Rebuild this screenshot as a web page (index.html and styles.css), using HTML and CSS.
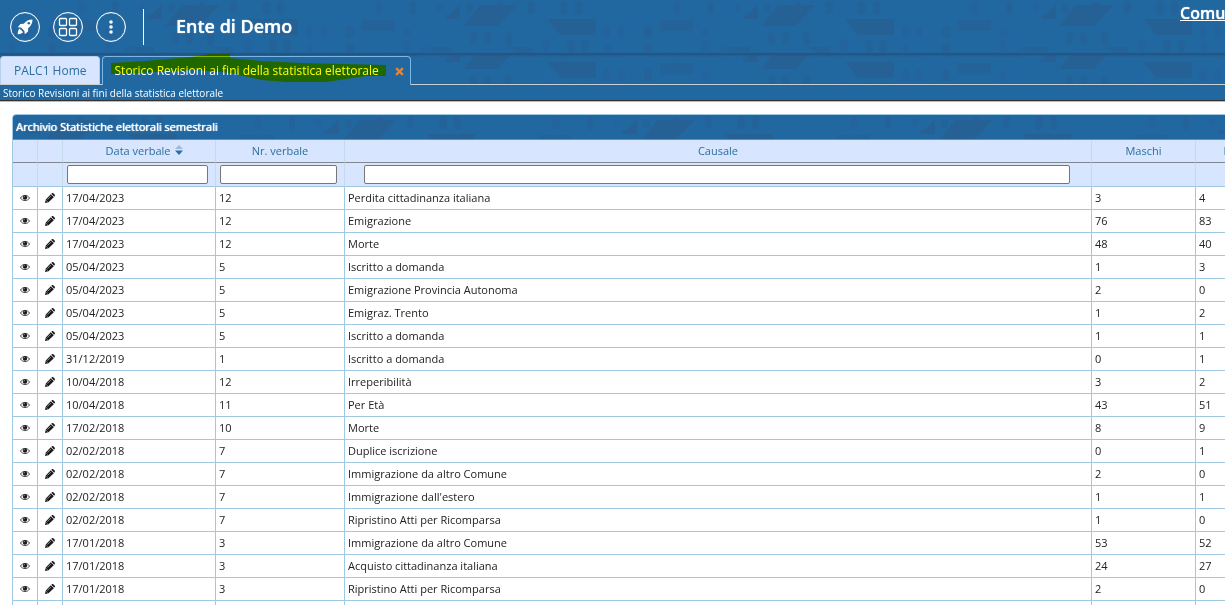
FILE: index.html
```html
<!DOCTYPE html>
<html lang="it">
<head>
<meta charset="utf-8">
<title>Ente di Demo</title>
<link rel="stylesheet" href="styles.css">
</head>
<body>
<svg class="defs" aria-hidden="true">
  <symbol id="eye" viewBox="0 0 11 8"><path d="M.5 4C2.8.2 8.2.2 10.500 4 8.200 7.800 2.800 7.800.500 4Z" fill="#fff" stroke="#222" stroke-width=".9"/><circle cx="5.500" cy="3.500" r="2.400" fill="#1a1a1a"/><path d="M4.300 3.300Q4.400 2.200 5.500 2.100" fill="none" stroke="#ccc" stroke-width=".6"/></symbol>
  <symbol id="pencil" viewBox="0 0 10 10"><path d="M0 10 .8 6.500 5.800 1.200 8.800 4.200 3.500 9.200ZM6.300.8 7.300 0Q7.800-.2 8.300.2L9.800 1.700Q10.200 2.200 9.800 2.700L9.200 3.700Z" fill="#1a1a1a"/><path d="M1.400 7.400 2.600 8.600M2.300 6.600 6 2.900" stroke="#fff" stroke-width=".5"/></symbol>
</svg>
<header class="topbar">
  <nav class="tools">
    <button class="round" type="button" aria-label="Avvio rapido"><svg viewBox="0 0 16 16"><path d="M15.500.5Q10 .5 6.800 4.800L3.400 5 .8 8.200 4 8.600 7.400 12 7.800 15.200 11 12.600 11.200 9.200Q15.500 6 15.500.5Z" fill="#fff"/><circle cx="11.800" cy="4.200" r="1.300" fill="#2167a0"/><path d="M3.300 9.600Q.8 10.300.7 15.300 5.400 15 6.300 12.700L5 12.500 4.700 11.200 3.300 11Z" fill="#fff"/></svg></button>
    <button class="round" type="button" aria-label="Applicazioni"><svg class="grid-icon" viewBox="0 0 20 20" fill="none" stroke="#fff" stroke-width="1.300"><rect x="1.500" y="1.500" width="7" height="7" rx="1"/><rect x="11.500" y="1.500" width="7" height="7" rx="1"/><rect x="1.500" y="11.500" width="7" height="7" rx="1"/><rect x="11.500" y="11.500" width="7" height="7" rx="1"/></svg></button>
    <button class="round" type="button" aria-label="Menu"><svg viewBox="0 0 16 16" fill="#fff"><circle cx="8" cy="3" r="1.800"/><circle cx="8" cy="8" r="1.800"/><circle cx="8" cy="13" r="1.800"/></svg></button>
  </nav>
  <h1 class="ente">Ente di Demo</h1>
  <a class="comune" href="#">Comune</a>
</header>
<nav class="tabs">
  <a class="tab" href="#">PALC1 Home</a>
  <div class="tab tab-active">
    <a class="tab-link" href="#">Storico Revisioni ai fini della statistica elettorale</a>
    <button class="close" type="button" aria-label="Chiudi"><svg viewBox="0 0 8 8"><path d="M1 1 7 7M7 1 1 7" stroke="#f58220" stroke-width="2"/></svg></button>
    <svg class="marker" viewBox="0 0 276 30" aria-hidden="true"><path d="M0 9 35 7 80 3 100 0H119V4L150 7 190 9 275 11V22H255L235 25 215 28H175L150 26 120 19 85 16 45 18 10 20H0Z" fill="#ff0"/></svg>
  </div>
</nav>
<div class="crumb">Storico Revisioni ai fini della statistica elettorale</div>
<main class="content">
  <section class="panel">
    <h2 class="panel-title">Archivio Statistiche elettorali semestrali</h2>
    <table class="grid">
      <colgroup><col class="c-icon"><col class="c-icon"><col class="c-date"><col class="c-nr"><col><col class="c-num"><col class="c-num"></colgroup>
      <thead>
        <tr class="labels"><th></th><th></th><th class="sorted">Data verbale <svg class="sort" viewBox="0 0 8 10"><path d="M0 4 4 0 8 4Z" fill="#9bb9dc"/><path d="M0 5.500H8L4 10Z" fill="#2d6ca5"/></svg></th><th>Nr. verbale</th><th>Causale</th><th>Maschi</th><th>Femmine</th></tr>
        <tr class="filters"><td></td><td></td><td><input type="text" aria-label="Data verbale"></td><td><input type="text" aria-label="Nr. verbale"></td><td><input class="wide" type="text" aria-label="Causale"></td><td></td><td></td></tr>
      </thead>
      <tbody id="rows"></tbody>
    </table>
  </section>
</main>
<script src="rows.js"></script>
</body>
</html>
```
FILE: styles.css
```css
:root {
  --blue: #2167a0;
  --line: #a0c8e2;
  --town: url("data:image/svg+xml,%3Csvg xmlns='http://www.w3.org/2000/svg' width='298' height='56'%3E%3Cg fill='%232b5b8c' fill-opacity='.5'%3E%3Cpath d='M3 26 20 5H58L38 26ZM87 19H136V35H100ZM298 4 283 19H298Z'/%3E%3Cg fill-opacity='.28'%3E%3Crect x='6' y='4' width='7' height='9' rx='3'/%3E%3Crect x='36' y='2' width='8' height='9' rx='3'/%3E%3Crect x='68' y='1' width='7' height='13' rx='3'/%3E%3Crect x='100' y='1' width='8' height='14' rx='3'/%3E%3Crect x='115' y='1' width='7' height='14' rx='3'/%3E%3Crect x='213' y='1' width='8' height='14' rx='3'/%3E%3Crect x='248' y='1' width='6' height='14' rx='3'/%3E%3Crect x='274' y='3' width='7' height='9' rx='3'/%3E%3Crect x='10' y='32' width='7' height='12' rx='3'/%3E%3Crect x='24' y='32' width='7' height='12' rx='3'/%3E%3Crect x='45' y='32' width='7' height='14' rx='3'/%3E%3Crect x='82' y='39' width='8' height='13' rx='3'/%3E%3Crect x='107' y='40' width='8' height='13' rx='3'/%3E%3Crect x='121' y='40' width='8' height='13' rx='3'/%3E%3Crect x='143' y='26' width='8' height='12' rx='3'/%3E%3Crect x='158' y='26' width='7' height='12' rx='3'/%3E%3Crect x='184' y='26' width='8' height='12' rx='3'/%3E%3Crect x='144' y='43' width='7' height='10' rx='3'/%3E%3Crect x='184' y='43' width='8' height='10' rx='3'/%3E%3Crect x='241' y='28' width='8' height='9' rx='4'/%3E%3Crect x='241' y='40' width='8' height='12' rx='3'/%3E%3Cpath d='M200 20H233V31H200ZM48 47H72V53H59ZM260 47H290V52H260ZM283 15H298V19H283Z'/%3E%3C/g%3E%3C/g%3E%3Cg fill='%231f6dad' fill-opacity='.15'%3E%3Cpath d='M64 26H84L98 40V53H77V28H64ZM137 22H172V53H137ZM160 18 176 6 192 18V24H160ZM206 0H225V18H206ZM236 24H270V53H236ZM263 0H283V19H263Z'/%3E%3C/g%3E%3C/svg%3E");
}

* { box-sizing: border-box; }

body {
  margin: 0;
  height: 100vh;
  overflow: hidden;
  background: #fff;
  color: #222;
  font: 11px/16px "Open Sans", "Noto Sans", sans-serif;
}

.defs { display: none; }

button { padding: 0; background: none; border: 0; cursor: pointer; }

.topbar {
  display: flex;
  align-items: center;
  height: 53px;
  padding-left: 10px;
  background: var(--blue) var(--town) 162px 0;
  color: #fff;
}

.tools {
  display: flex;
  align-items: center;
  gap: 13px;
  height: 36px;
  padding-right: 17px;
  border-right: 1px solid #fff;
}

.round {
  display: flex;
  align-items: center;
  justify-content: center;
  width: 30px;
  height: 30px;
  border: 1px solid #fff;
  border-radius: 50%;
  box-shadow: inset 0 0 1px #fff;
}

.round svg { width: 16px; height: 16px; }
.round .grid-icon { width: 20px; height: 20px; }

.ente {
  margin: 0 0 0 32px;
  padding-bottom: 2px;
  font-size: 18px;
  line-height: 24px;
  font-weight: 600;
  text-shadow: 0 0 1px #fff;
}

.comune {
  align-self: flex-start;
  width: 45px;
  margin-left: auto;
  padding-top: 3px;
  overflow: hidden;
  color: #fff;
  font-size: 16px;
  line-height: 20px;
  font-weight: 600;
  text-shadow: 0 0 1px #fff;
}

.tabs {
  display: flex;
  align-items: flex-end;
  gap: 2px;
  height: 32px;
  background: linear-gradient(#2a4f75, transparent 4px), var(--town) 162px -10px, var(--blue);
  box-shadow: inset 0 -1px #c8d0d4;
}

.tab {
  display: flex;
  align-items: center;
  height: 29px;
  padding: 0 12px 0 13px;
  border: 1px solid #b7cfec;
  border-bottom-color: #c8d0d4;
  border-radius: 4px 4px 0 0;
  background: #d7e5ff;
  color: #2e6e9e;
  font-size: 12px;
  text-decoration: none;
}

.tab-active {
  position: relative;
  gap: 16px;
  padding: 0 6px 0 12px;
  border-color: #79b7e7;
  border-bottom: 0;
  background: var(--blue);
}

.tab-link { color: #fff; text-decoration: none; }
.close { display: flex; width: 9px; height: 9px; }
.close svg { width: 9px; height: 9px; }

.marker {
  position: absolute;
  left: 8px;
  top: -3px;
  width: 276px;
  height: 30px;
  mix-blend-mode: multiply;
  pointer-events: none;
}

.crumb {
  height: 16px;
  padding-left: 3px;
  border-bottom: 1px solid #333;
  background: var(--blue);
  color: #fff;
  font-size: 10px;
}

.content { padding: 12px 0 0 12px; border-top: 1px solid #bbb; overflow: hidden; }

.panel {
  width: calc(100% + 76px);
  border: 1px solid var(--line);
  border-radius: 4px 4px 0 0;
  overflow: hidden;
}

.panel-title {
  height: 25px;
  margin: 0;
  padding-left: 3px;
  border-bottom: 1px solid #4297d7;
  background: var(--blue) var(--town) 28px 0;
  color: #fff;
  font-size: 11px;
  line-height: 24px;
  font-weight: 400;
  text-shadow: 0 0 1px #fff, 1px 0 rgb(255 255 255 / 50%);
}

.grid {
  width: 100%;
  table-layout: fixed;
  border-spacing: 0;
}

.c-icon { width: 25px; }
.c-date { width: 153px; }
.c-nr { width: 129px; }
.c-num { width: 104px; }

.grid th, .grid td { padding: 0 3px; text-align: left; }

.labels th {
  height: 23px;
  border-right: 1px solid #c5dbec;
  border-bottom: 1px solid #808890;
  background: #d7e5ff;
  color: #2e6e9e;
  font-weight: 400;
}

.grid .labels th { text-align: center; }
.grid .labels .sorted { padding-left: 14px; }
.sort { width: 8px; height: 10px; margin-left: 2px; }

.filters td {
  height: 24px;
  border-right: 1px solid #c5dbec;
  border-bottom: 1px solid var(--line);
  background: #d7e5ff;
}

.grid .filters td { padding: 0 7px 0 4px; }

.filters input {
  display: block;
  width: 100%;
  height: 19px;
  padding: 1px 2px;
  border: 1px solid #767676;
  border-radius: 2px;
  background: #fff;
  font: inherit;
}

.filters .wide { width: calc(100% - 29px); margin: 0 auto; }

tbody td {
  height: 23px;
  border-right: 1px solid var(--line);
  border-bottom: 1px solid var(--line);
}

.grid .icon-cell { padding: 0; text-align: center; }
.row-button { display: block; margin: 0 auto; }
.row-button svg { display: block; width: 10px; height: 10px; }
```
FILE: rows.js
```js
const records = [
  ["17/04/2023", 12, "Perdita cittadinanza italiana", 3, 4],
  ["17/04/2023", 12, "Emigrazione", 76, 83],
  ["17/04/2023", 12, "Morte", 48, 40],
  ["05/04/2023", 5, "Iscritto a domanda", 1, 3],
  ["05/04/2023", 5, "Emigrazione Provincia Autonoma", 2, 0],
  ["05/04/2023", 5, "Emigraz. Trento", 1, 2],
  ["05/04/2023", 5, "Iscritto a domanda", 1, 1],
  ["31/12/2019", 1, "Iscritto a domanda", 0, 1],
  ["10/04/2018", 12, "Irreperibilità", 3, 2],
  ["10/04/2018", 11, "Per Età", 43, 51],
  ["17/02/2018", 10, "Morte", 8, 9],
  ["02/02/2018", 7, "Duplice iscrizione", 0, 1],
  ["02/02/2018", 7, "Immigrazione da altro Comune", 2, 0],
  ["02/02/2018", 7, "Immigrazione dall'estero", 1, 1],
  ["02/02/2018", 7, "Ripristino Atti per Ricomparsa", 1, 0],
  ["17/01/2018", 3, "Immigrazione da altro Comune", 53, 52],
  ["17/01/2018", 3, "Acquisto cittadinanza italiana", 24, 27],
  ["17/01/2018", 3, "Ripristino Atti per Ricomparsa", 2, 0],
  ["", "", "", "", ""]
];

const iconCell = (icon, label, shown) =>
  `<td class="icon-cell">${shown ? `<button class="row-button" type="button" aria-label="${label}"><svg><use href="#${icon}"/></svg></button>` : ""}</td>`;

document.getElementById("rows").innerHTML = records.map(r =>
  `<tr>${iconCell("eye", "Visualizza", r[0])}${iconCell("pencil", "Modifica", r[0])}${r.map(v => `<td>${v}</td>`).join("")}</tr>`
).join("");
```
